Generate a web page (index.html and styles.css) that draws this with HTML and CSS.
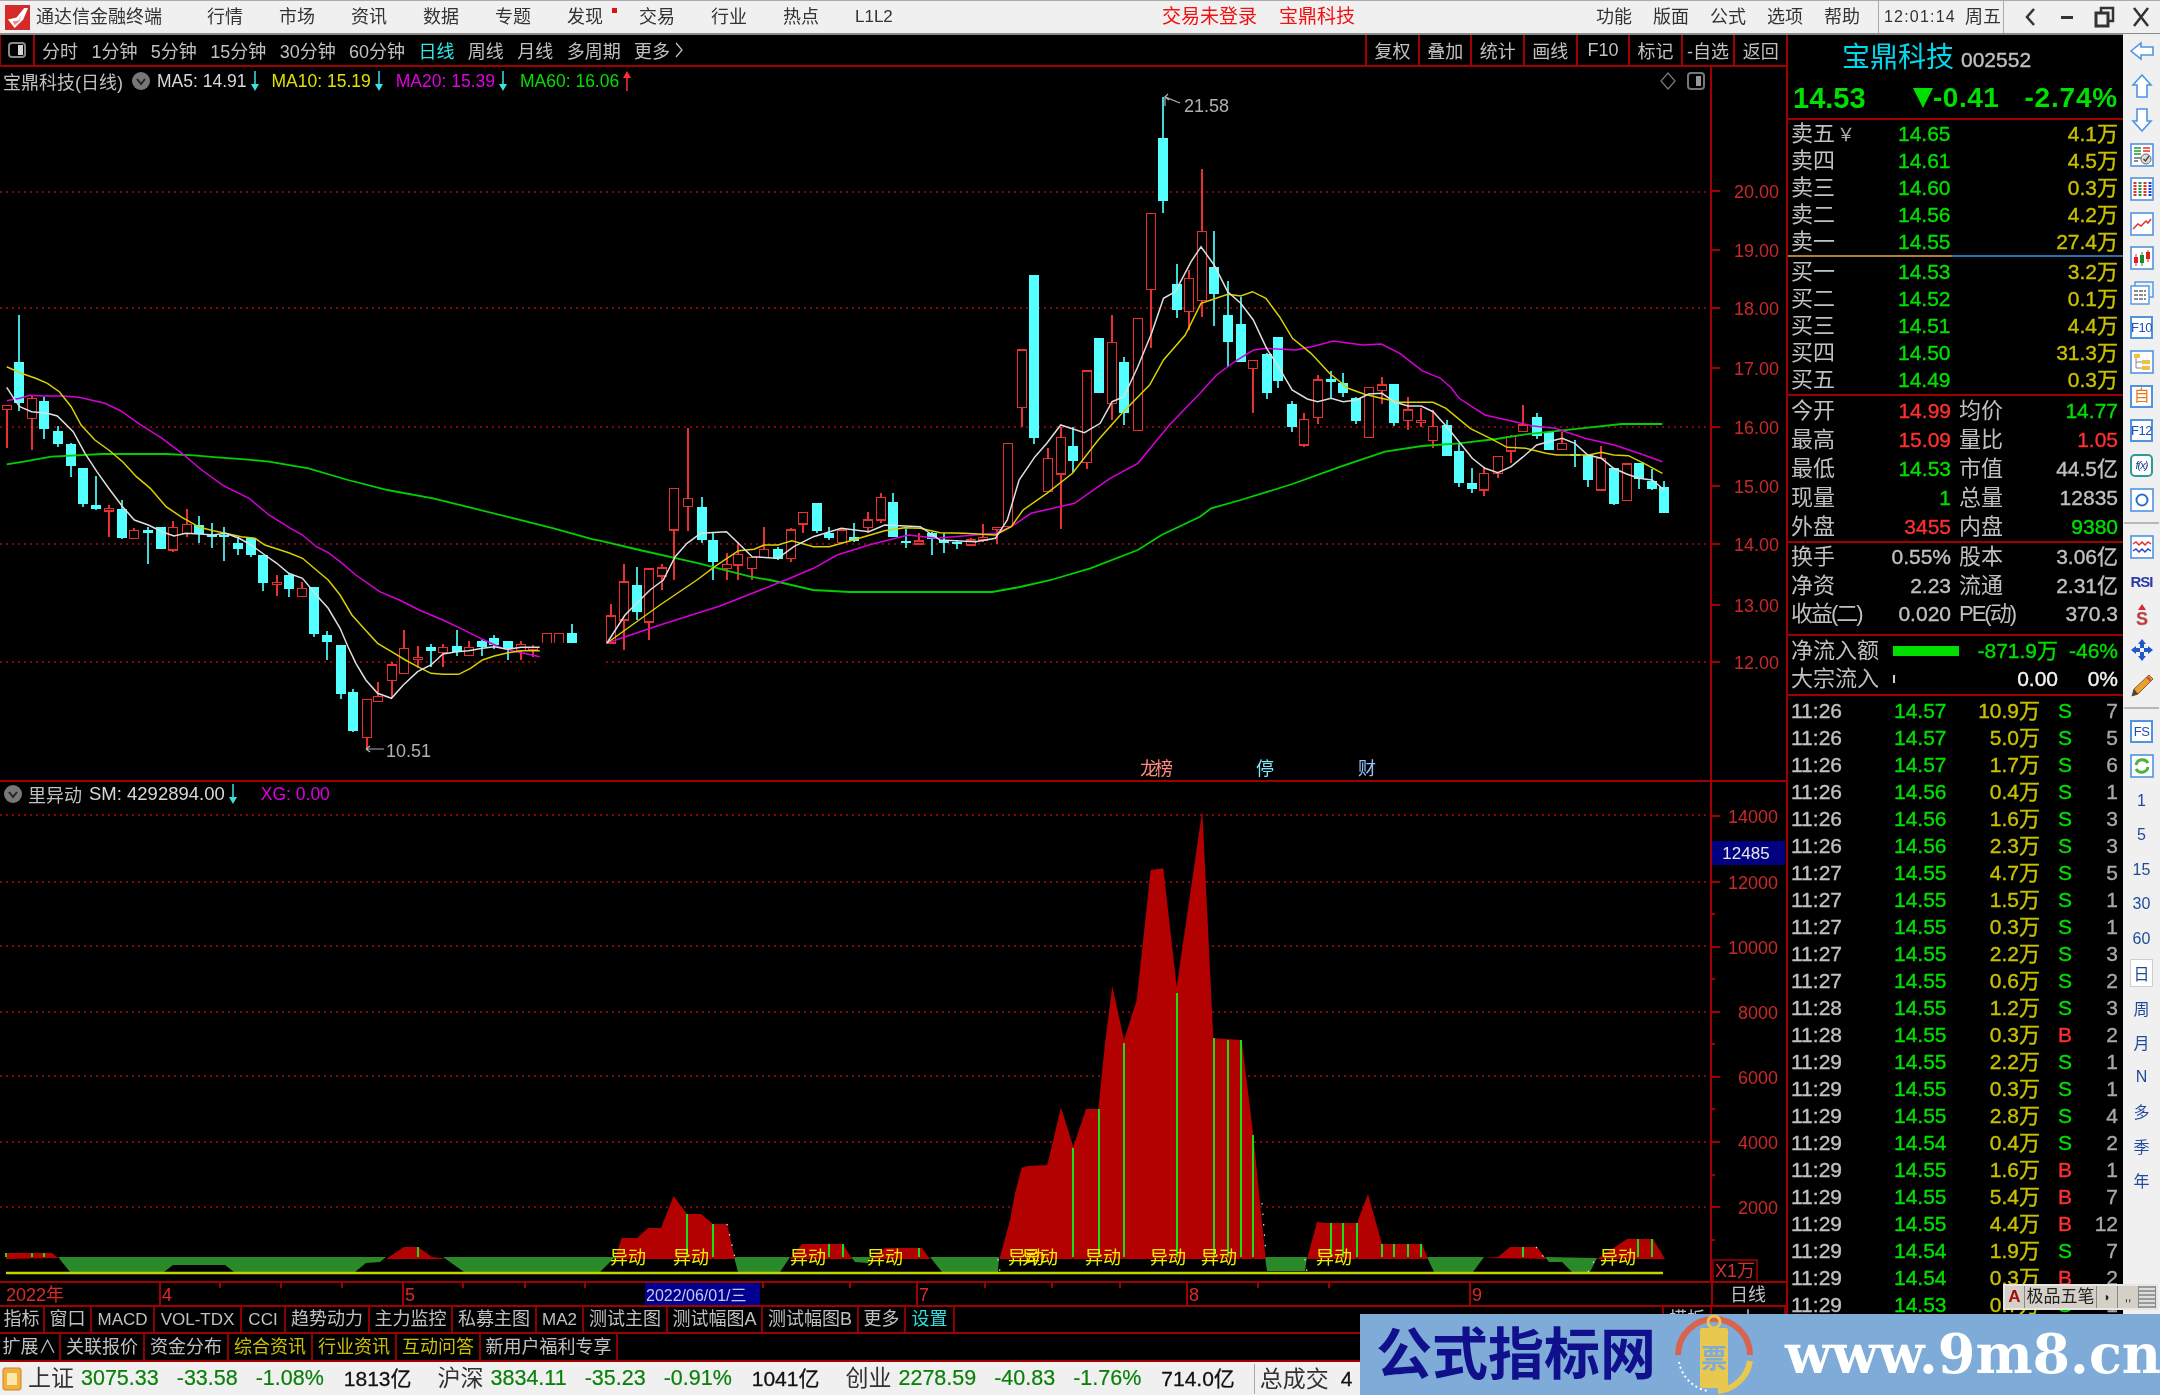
FILE: index.html
```html
<!DOCTYPE html>
<html lang="zh-CN">
<head>
<meta charset="utf-8">
<title>通达信金融终端</title>
<link rel="stylesheet" href="styles.css">
</head>
<body>
<div class="app">
  <header class="titlebar">
    <div class="brand">
      <svg class="logo" viewBox="0 0 26 26"><rect width="26" height="26" fill="#d42a2a"/><path d="M3 15 L12 13 L20 3 L24 3 L19 15 L10 24 L7 20 Z" fill="#fff"/><path d="M8 17 L14 16 L17 11 L15 17 L10 21 Z" fill="#e88"/></svg>
      <span>通达信金融终端</span>
    </div>
    <nav class="menu">
      <span>行情</span><span>市场</span><span>资讯</span><span>数据</span><span>专题</span><span class="has-dot">发现<i class="dot"></i></span><span>交易</span><span>行业</span><span>热点</span><span class="l1">L1L2</span>
    </nav>
    <div class="alert"><span>交易未登录</span><span>宝鼎科技</span></div>
    <nav class="menu-right"><span>功能</span><span>版面</span><span>公式</span><span>选项</span><span>帮助</span></nav>
    <div class="clock"><span class="time">12:01:14</span><span>周五</span></div>
    <div class="winbtns">
      <svg viewBox="0 0 37 30"><path d="M22 7 L15 15 L22 23" fill="none" stroke="#333" stroke-width="2.5"/></svg>
      <svg viewBox="0 0 37 30"><rect x="12" y="14" width="12" height="3" fill="#333"/></svg>
      <svg viewBox="0 0 37 30"><rect x="15" y="6" width="12" height="13" fill="none" stroke="#333" stroke-width="2.5"/><rect x="10" y="11" width="12" height="13" fill="#f0f0f0" stroke="#333" stroke-width="3"/></svg>
      <svg viewBox="0 0 37 30"><path d="M11 6 L25 24 M25 6 L11 24" stroke="#333" stroke-width="2.5"/></svg>
    </div>
  </header>

  <div class="main">
    <section class="workspace">
      <div class="toolbar">
        <div class="panel-toggle"><svg viewBox="0 0 18 16"><rect x="1" y="1" width="16" height="14" rx="3" fill="none" stroke="#8a8a8a" stroke-width="2"/><rect x="10" y="3" width="5" height="10" fill="#d8d8d8"/></svg></div>
        <div class="periods">
          <span>分时</span><span>1分钟</span><span>5分钟</span><span>15分钟</span><span>30分钟</span><span>60分钟</span><span class="on">日线</span><span>周线</span><span>月线</span><span>多周期</span><span class="more">更多<svg viewBox="0 0 10 18"><path d="M2 2 L8 9 L2 16" fill="none" stroke="#c0c0c0" stroke-width="1.3"/></svg></span>
        </div>
        <div class="tools">
          <span>复权</span><span>叠加</span><span>统计</span><span>画线</span><span>F10</span><span>标记</span><span>-自选</span><span>返回</span>
        </div>
      </div>

      <div class="chart chart-main">
        <svg id="mainChart" class="plot" viewBox="0 67 1786 713"></svg>
        <div class="legend">
          <span class="lg-name">宝鼎科技(日线)</span>
          <svg class="lg-circle" viewBox="0 0 18 18"><circle cx="9" cy="9" r="9" fill="#777"/><path d="M5 7 L9 12 L13 7" fill="none" stroke="#222" stroke-width="2"/></svg>
          <span class="lg-item ma5">MA5: 14.91</span><svg class="arr" viewBox="0 0 8 20"><path d="M4 0 V18" stroke="#3fe0e0" stroke-width="1.5"/><path d="M0 13 H8 L4 20 Z" fill="#3fe0e0"/></svg>
          <span class="lg-item ma10">MA10: 15.19</span><svg class="arr" viewBox="0 0 8 20"><path d="M4 0 V18" stroke="#3fe0e0" stroke-width="1.5"/><path d="M0 13 H8 L4 20 Z" fill="#3fe0e0"/></svg>
          <span class="lg-item ma20">MA20: 15.39</span><svg class="arr" viewBox="0 0 8 20"><path d="M4 0 V18" stroke="#3fe0e0" stroke-width="1.5"/><path d="M0 13 H8 L4 20 Z" fill="#3fe0e0"/></svg>
          <span class="lg-item ma60">MA60: 16.06</span><svg class="arr" viewBox="0 0 8 20"><path d="M4 2 V20" stroke="#ff3030" stroke-width="1.5"/><path d="M0 7 H8 L4 0 Z" fill="#ff3030"/></svg>
          <span class="lg-tools">
            <svg class="lg-diamond" viewBox="0 0 16 18"><path d="M8 1 L15 9 L8 17 L1 9 Z" fill="none" stroke="#777" stroke-width="1.3"/></svg>
            <svg class="lg-panel" viewBox="0 0 18 18"><rect x="1" y="1" width="16" height="16" rx="3" fill="none" stroke="#777" stroke-width="2"/><rect x="9" y="4" width="5" height="10" fill="#999"/></svg>
          </span>
        </div>
      </div>

      <div class="chart chart-sub">
        <svg id="subChart" class="plot" viewBox="0 782 1786 499"></svg>
        <div class="legend legend-sub">
          <svg class="lg-circle" viewBox="0 0 18 18"><circle cx="9" cy="9" r="9" fill="#777"/><path d="M5 7 L9 12 L13 7" fill="none" stroke="#222" stroke-width="2"/></svg>
          <span class="lg-name sub-name">里异动</span>
          <span class="lg-item ma5 sub-sm">SM: 4292894.00</span><svg class="arr" viewBox="0 0 8 20"><path d="M4 0 V18" stroke="#3fe0e0" stroke-width="1.5"/><path d="M0 13 H8 L4 20 Z" fill="#3fe0e0"/></svg>
          <span class="lg-item ma20 sub-xg">XG: 0.00</span>
        </div>
      </div>

      <div class="dateaxis"><svg id="dateAxis" class="plot" viewBox="0 1283 1786 22"></svg></div>

      <div class="tabs tabs-a">
        <span>指标</span><span>窗口</span><span class="lat">MACD</span><span class="lat">VOL-TDX</span><span class="lat">CCI</span><span>趋势动力</span><span>主力监控</span><span>私募主图</span><span class="lat">MA2</span><span>测试主图</span><span>测试幅图A</span><span>测试幅图B</span><span>更多</span><span class="cy">设置</span><span class="blank"></span><span>模板</span><span>十</span>
      </div>
      <div class="tabs tabs-b">
        <span>扩展∧</span><span>关联报价</span><span>资金分布</span><span class="yl">综合资讯</span><span class="yl">行业资讯</span><span class="yl">互动问答</span><span>新用户福利专享</span>
      </div>
    </section>

    <aside class="quote">
      <div class="q-head">
        <div class="q-name"><span class="nm">宝鼎科技</span><span class="cd">002552</span></div>
        <div class="q-price"><span class="p1">14.53</span><span class="p2"><i class="tri"></i>-0.41</span><span class="p3">-2.74%</span></div>
      </div>
      <div class="book asks">
        <div class="row-q"><span>卖五<em class="yen">￥</em></span><b class="gr">14.65</b><u>4.1万</u></div>
        <div class="row-q"><span>卖四</span><b class="gr">14.61</b><u>4.5万</u></div>
        <div class="row-q"><span>卖三</span><b class="gr">14.60</b><u>0.3万</u></div>
        <div class="row-q"><span>卖二</span><b class="gr">14.56</b><u>4.2万</u></div>
        <div class="row-q"><span>卖一</span><b class="gr">14.55</b><u>27.4万</u></div>
      </div>
      <div class="midline"><i></i><i></i></div>
      <div class="book bids">
        <div class="row-q"><span>买一</span><b class="gr">14.53</b><u>3.2万</u></div>
        <div class="row-q"><span>买二</span><b class="gr">14.52</b><u>0.1万</u></div>
        <div class="row-q"><span>买三</span><b class="gr">14.51</b><u>4.4万</u></div>
        <div class="row-q"><span>买四</span><b class="gr">14.50</b><u>31.3万</u></div>
        <div class="row-q"><span>买五</span><b class="gr">14.49</b><u>0.3万</u></div>
      </div>
      <div class="info info-a">
        <div class="row-i"><span>今开</span><b class="rd">14.99</b><span>均价</span><b class="gr">14.77</b></div>
        <div class="row-i"><span>最高</span><b class="rd">15.09</b><span>量比</span><b class="rd">1.05</b></div>
        <div class="row-i"><span>最低</span><b class="gr">14.53</b><span>市值</span><b>44.5亿</b></div>
        <div class="row-i"><span>现量</span><b class="gr">1</b><span>总量</span><b>12835</b></div>
        <div class="row-i"><span>外盘</span><b class="rd">3455</b><span>内盘</span><b class="gr">9380</b></div>
      </div>
      <div class="info info-b">
        <div class="row-i"><span>换手</span><b>0.55%</b><span>股本</span><b>3.06亿</b></div>
        <div class="row-i"><span>净资</span><b>2.23</b><span>流通</span><b>2.31亿</b></div>
        <div class="row-i"><span class="tight">收益(二)</span><b>0.020</b><span class="tight">PE(动)</span><b>370.3</b></div>
      </div>
      <div class="flow">
        <div class="row-f"><span>净流入额</span><i class="bar"></i><b class="gr">-871.9万</b><b class="gr">-46%</b></div>
        <div class="row-f"><span>大宗流入</span><i class="bar0"></i><b class="wh">0.00</b><b class="wh">0%</b></div>
      </div>
      <div class="ticks">
        <div class="row-t"><span>11:26</span><b class="gr">14.57</b><u>10.9万</u><b class="gr">S</b><em>7</em></div>
        <div class="row-t"><span>11:26</span><b class="gr">14.57</b><u>5.0万</u><b class="gr">S</b><em>5</em></div>
        <div class="row-t"><span>11:26</span><b class="gr">14.57</b><u>1.7万</u><b class="gr">S</b><em>6</em></div>
        <div class="row-t"><span>11:26</span><b class="gr">14.56</b><u>0.4万</u><b class="gr">S</b><em>1</em></div>
        <div class="row-t"><span>11:26</span><b class="gr">14.56</b><u>1.6万</u><b class="gr">S</b><em>3</em></div>
        <div class="row-t"><span>11:26</span><b class="gr">14.56</b><u>2.3万</u><b class="gr">S</b><em>3</em></div>
        <div class="row-t"><span>11:27</span><b class="gr">14.55</b><u>4.7万</u><b class="gr">S</b><em>5</em></div>
        <div class="row-t"><span>11:27</span><b class="gr">14.55</b><u>1.5万</u><b class="gr">S</b><em>1</em></div>
        <div class="row-t"><span>11:27</span><b class="gr">14.55</b><u>0.3万</u><b class="gr">S</b><em>1</em></div>
        <div class="row-t"><span>11:27</span><b class="gr">14.55</b><u>2.2万</u><b class="gr">S</b><em>3</em></div>
        <div class="row-t"><span>11:27</span><b class="gr">14.55</b><u>0.6万</u><b class="gr">S</b><em>2</em></div>
        <div class="row-t"><span>11:28</span><b class="gr">14.55</b><u>1.2万</u><b class="gr">S</b><em>3</em></div>
        <div class="row-t"><span>11:28</span><b class="gr">14.55</b><u>0.3万</u><b class="rd">B</b><em>2</em></div>
        <div class="row-t"><span>11:29</span><b class="gr">14.55</b><u>2.2万</u><b class="gr">S</b><em>1</em></div>
        <div class="row-t"><span>11:29</span><b class="gr">14.55</b><u>0.3万</u><b class="gr">S</b><em>1</em></div>
        <div class="row-t"><span>11:29</span><b class="gr">14.55</b><u>2.8万</u><b class="gr">S</b><em>4</em></div>
        <div class="row-t"><span>11:29</span><b class="gr">14.54</b><u>0.4万</u><b class="gr">S</b><em>2</em></div>
        <div class="row-t"><span>11:29</span><b class="gr">14.55</b><u>1.6万</u><b class="rd">B</b><em>1</em></div>
        <div class="row-t"><span>11:29</span><b class="gr">14.55</b><u>5.4万</u><b class="rd">B</b><em>7</em></div>
        <div class="row-t"><span>11:29</span><b class="gr">14.55</b><u>4.4万</u><b class="rd">B</b><em>12</em></div>
        <div class="row-t"><span>11:29</span><b class="gr">14.54</b><u>1.9万</u><b class="gr">S</b><em>7</em></div>
        <div class="row-t"><span>11:29</span><b class="gr">14.54</b><u>0.3万</u><b class="rd">B</b><em>2</em></div>
        <div class="row-t"><span>11:29</span><b class="gr">14.53</b><u>0.7万</u><b class="gr">S</b><em>1</em></div>
      </div>
    </aside>

    <aside class="strip">
      <div class="si"><svg viewBox="0 0 24 24"><path d="M1 12 L11 4 V8 H23 V16 H11 V20 Z" fill="#fff" stroke="#4f94e0" stroke-width="1.6"/></svg></div>
      <div class="si"><svg viewBox="0 0 24 24"><path d="M12 1 L21 11 H17 V23 H7 V11 H3 Z" fill="#fff" stroke="#4f94e0" stroke-width="1.6"/></svg></div>
      <div class="si"><svg viewBox="0 0 24 24"><path d="M12 23 L21 13 H17 V1 H7 V13 H3 Z" fill="#fff" stroke="#4f94e0" stroke-width="1.6"/></svg></div>
      <div class="si"><svg viewBox="0 0 24 24"><rect x="1" y="1" width="22" height="22" fill="#fff" stroke="#4f94e0" stroke-width="1.6"/><path d="M4 5h7M4 8h7M4 11h7" stroke="#1f9a3a" stroke-width="1.6"/><path d="M13 5h7M13 8h7" stroke="#e03030" stroke-width="1.6"/><path d="M4 15h7M4 18h4" stroke="#666" stroke-width="1.5"/><circle cx="16" cy="16" r="5" fill="#ddd" stroke="#666"/><path d="M13.500 16 L15.500 18 L19 13" fill="none" stroke="#444" stroke-width="1.4"/></svg></div>
      <div class="si"><svg viewBox="0 0 24 24"><rect x="1" y="1" width="22" height="22" fill="#fff" stroke="#4f94e0" stroke-width="1.6"/><path d="M5 5v15" stroke="#e03030" stroke-width="3" stroke-dasharray="2 1"/><path d="M10 5v15" stroke="#1f9a3a" stroke-width="3" stroke-dasharray="2 1"/><path d="M15 5v15" stroke="#e03030" stroke-width="3" stroke-dasharray="2 1"/><path d="M20 5v15" stroke="#2040e0" stroke-width="3" stroke-dasharray="2 1"/></svg></div>
      <div class="si"><svg viewBox="0 0 24 24"><rect x="1" y="1" width="22" height="22" fill="#fff" stroke="#4f94e0" stroke-width="1.6"/><path d="M3 17 L8 12 L11 14 L16 9 L18 11 L21 7" fill="none" stroke="#e03030" stroke-width="1.5"/></svg></div>
      <div class="si"><svg viewBox="0 0 24 24"><rect x="1" y="1" width="22" height="22" fill="#fff" stroke="#4f94e0" stroke-width="1.6"/><path d="M6 8v12M18 4v12" stroke="#e02020"/><path d="M12 6v14" stroke="#1a8a30"/><rect x="4" y="11" width="4" height="6" fill="#e02020"/><rect x="10" y="9" width="4" height="8" fill="#1a8a30"/><rect x="16" y="6" width="4" height="7" fill="#e02020"/></svg></div>
      <div class="si"><svg viewBox="0 0 24 24"><rect x="5" y="1" width="18" height="15" fill="#eef4fb" stroke="#4f94e0" stroke-width="1.4"/><rect x="1" y="5" width="18" height="18" fill="#fff" stroke="#4f94e0" stroke-width="1.4"/><path d="M4 10h12M4 14h12M4 18h12" stroke="#666" stroke-width="1.6" stroke-dasharray="4 1"/></svg></div>
      <div class="si"><span class="boxed">F10</span></div>
      <div class="si"><svg viewBox="0 0 24 24"><rect x="1" y="1" width="22" height="22" fill="#fff" stroke="#4f94e0" stroke-width="1.6"/><path d="M6 7v11h7M6 12h7" fill="none" stroke="#888"/><rect x="4" y="4" width="6" height="4" fill="#f0c040"/><rect x="12" y="10" width="8" height="4" fill="#f0c040"/><rect x="12" y="16" width="8" height="4" fill="#f0c040"/></svg></div>
      <div class="si"><span class="boxed bx-or">自</span></div>
      <div class="si"><span class="boxed">F12</span></div>
      <div class="si"><span class="boxed bx-fx"><i>f(x)</i></span></div>
      <div class="si"><svg viewBox="0 0 24 24"><rect x="1" y="1" width="22" height="22" fill="#fff" stroke="#4f94e0" stroke-width="1.6"/><circle cx="12" cy="12" r="5.500" fill="none" stroke="#2a6fd0" stroke-width="2"/></svg></div>
      <div class="sep"></div>
      <div class="si"><svg viewBox="0 0 24 24"><rect x="1" y="1" width="22" height="22" fill="#fff" stroke="#4f94e0" stroke-width="1.6"/><path d="M3 9 L6 7 L9 10 L12 7 L15 10 L18 7 L21 9" fill="none" stroke="#e03030" stroke-width="1.5"/><path d="M3 16 L6 14 L9 17 L12 14 L15 17 L18 14 L21 16" fill="none" stroke="#3040c0" stroke-width="1.5"/></svg></div>
      <div class="si"><span class="rsi">RSI</span></div>
      <div class="si"><svg viewBox="0 0 24 24"><path d="M12 0 L16 6 H8 Z" fill="#d03030"/><text x="12" y="21" class="s-glyph">S</text></svg></div>
      <div class="si"><svg viewBox="0 0 24 24"><path d="M12 1 L16 6 H14 V10 H10 V6 H8 Z M12 23 L16 18 H14 V14 H10 V18 H8 Z M1 12 L6 8 V10 H10 V14 H6 V16 Z M23 12 L18 8 V10 H14 V14 H18 V16 Z" fill="#1f58c8"/></svg></div>
      <div class="si"><svg viewBox="0 0 24 24"><path d="M19 2 L23 6 L8 21 L2 23 L4 16 Z" fill="#e8a030" stroke="#8a6020"/><path d="M2 23 L4 16 L8 21 Z" fill="#444"/><path d="M17 4 L21 8" stroke="#d04040" stroke-width="2"/></svg></div>
      <div class="sep"></div>
      <div class="si"><span class="boxed">FS</span></div>
      <div class="si"><svg viewBox="0 0 24 24"><rect x="1" y="1" width="22" height="22" fill="#fff" stroke="#4f94e0" stroke-width="1.6"/><path d="M6 11 A6.500 6.500 0 0 1 18 9 M18 13 A6.500 6.500 0 0 1 6 15" fill="none" stroke="#50b040" stroke-width="3"/></svg></div>
      <div class="si txt">1</div>
      <div class="si txt">5</div>
      <div class="si txt">15</div>
      <div class="si txt">30</div>
      <div class="si txt">60</div>
      <div class="si txt sel"><span>日</span></div>
      <div class="si txt">周</div>
      <div class="si txt">月</div>
      <div class="si txt">N</div>
      <div class="si txt">多</div>
      <div class="si txt">季</div>
      <div class="si txt">年</div>
    </aside>
  </div>

  <footer class="statusbar">
    <svg class="st-icon" viewBox="0 0 20 24"><rect x="1" y="1" width="18" height="22" rx="2" fill="#f2b040" stroke="#d08020"/><rect x="5" y="6" width="10" height="12" fill="#fce8a8"/></svg>
    <span class="st-name">上证</span><span class="st-v">3075.33</span><span class="st-v">-33.58</span><span class="st-v">-1.08%</span><span class="st-a">1813亿</span>
    <span class="st-name st-next">沪深</span><span class="st-v">3834.11</span><span class="st-v">-35.23</span><span class="st-v">-0.91%</span><span class="st-a">1041亿</span>
    <span class="st-name st-next">创业</span><span class="st-v">2278.59</span><span class="st-v">-40.83</span><span class="st-v">-1.76%</span><span class="st-a">714.0亿</span>
    <span class="st-total">总成交</span><span class="st-a st-last">4</span>
  </footer>

  <div class="ime">
    <span class="ime-a">A</span><span class="ime-n">极品五笔</span><span class="ime-m">◗</span><span class="ime-m">,,</span><span class="ime-k"></span>
  </div>

  <div class="watermark">
    <span class="wm-cn">公式指标网</span>
    <svg class="wm-logo" viewBox="0 0 80 82">
      <path d="M4 41 A36 36 0 0 1 76 41" fill="none" stroke="#d8634f" stroke-width="6"/>
      <path d="M76 47 A36 36 0 0 1 44 77" fill="none" stroke="#e8c84e" stroke-width="6"/>
      <path d="M5 48 A36 36 0 0 0 34 77" fill="none" stroke="#fff" stroke-width="2" stroke-dasharray="2 3"/>
      <rect x="26" y="14" width="28" height="60" rx="2" fill="#e8c84e"/>
      <circle cx="40" cy="8" r="6" fill="none" stroke="#e8c84e" stroke-width="3"/>
      <text x="40" y="54" class="wm-coin">票</text>
    </svg>
    <span class="wm-url">www.9m8.cn</span>
  </div>
</div>
<script src="app.js"></script>
</body>
</html>
```

FILE: styles.css
```css
* { box-sizing: border-box; }
html, body { margin: 0; padding: 0; background: #000; }
body { font-family: "Liberation Sans", "Noto Sans CJK SC", sans-serif; }
.app { position: relative; width: 2160px; height: 1395px; overflow: hidden; display: flex; flex-direction: column; background: #000; color: #c0c0c0; filter: blur(.35px); }

/* title bar */
.titlebar { flex: 0 0 35px; display: flex; align-items: center; background: #f0f0f0; border-top: 1px solid #aaa; border-bottom: 2px solid #8c8c8c; color: #333; font-size: 18px; line-height: 32px; }
.brand { flex: 0 0 207px; display: flex; align-items: center; gap: 6px; padding-left: 5px; }
.logo { width: 25px; height: 25px; }
.menu { flex: 0 0 955px; display: flex; gap: 36px; }
.menu .l1 { font-size: 17px; }
.has-dot { position: relative; }
.dot { position: absolute; left: 45px; top: 7px; width: 5px; height: 5px; background: #e01010; }
.alert { flex: 0 0 434px; display: flex; gap: 22px; color: #f01010; font-size: 19px; }
.menu-right { flex: 0 0 282px; display: flex; gap: 21px; font-size: 18px; }
.clock { flex: 0 0 126px; height: 32px; display: flex; align-items: center; gap: 9px; padding-left: 5px; border-left: 1px solid #aaa; border-right: 1px solid #aaa; }
.time { font-size: 16px; letter-spacing: 1.2px; }
.winbtns { flex: 1; display: flex; padding-left: 8px; }
.winbtns svg { width: 37px; height: 30px; }

.main { flex: 0 0 1325px; display: flex; }
.workspace { flex: 0 0 1788px; border-right: 2px solid #a00000; display: flex; flex-direction: column; }

/* toolbar */
.toolbar { flex: 0 0 32px; display: flex; align-items: center; border-bottom: 2px solid #a00000; font-size: 18px; }
.panel-toggle { flex: 0 0 35px; height: 30px; display: flex; align-items: center; justify-content: center; border-right: 2px solid #a00000; border-left: 1px solid #a00000; }
.panel-toggle svg { width: 18px; height: 16px; }
.periods { display: flex; gap: 13.400px; padding-left: 7px; white-space: nowrap; }
.periods .on { color: #30e8e8; }
.more { display: flex; align-items: center; gap: 4px; }
.more svg { width: 10px; height: 18px; }
.tools { margin-left: auto; display: flex; height: 30px; }
.tools span { width: 52.600px; display: flex; align-items: center; justify-content: center; border-left: 2px solid #a00000; }

/* charts */
.chart { position: relative; }
.chart-main { flex: 0 0 715px; border-bottom: 2px solid #a00000; }
.chart-sub { flex: 0 0 501px; border-bottom: 2px solid #a00000; }
.plot { display: block; width: 1786px; height: 100%; }
.legend { position: absolute; left: 0; top: 0; width: 1710px; height: 28px; display: flex; align-items: center; font-size: 17.500px; padding-left: 3px; white-space: nowrap; }
.lg-name { color: #c0c0c0; font-size: 18px; }
.lg-circle { width: 18px; height: 18px; margin-left: 9px; }
.lg-item { margin-left: 7px; }
.arr { width: 8px; height: 20px; margin-left: 4px; margin-right: 6px; }
.ma5 { color: #d8d8d8; }
.ma10 { color: #e0e000; }
.ma20 { color: #e000e0; }
.ma60 { color: #00e000; }
.lg-tools { margin-left: auto; display: flex; align-items: center; gap: 11px; padding-right: 5px; }
.lg-diamond { width: 16px; height: 18px; }
.lg-panel { width: 18px; height: 18px; }
.legend-sub { top: 0; height: 24px; padding-left: 0; }
.legend-sub .lg-circle { margin-left: 4px; }
.sub-name { margin-left: 6px; }
.sub-sm { font-size: 18.500px; }
.sub-xg { margin-left: 18px; }

.gridline { stroke: #a80a0a; stroke-width: 1.5; stroke-dasharray: 2 4; fill: none; }
.axisline { stroke: #a00000; stroke-width: 2; }
.tick { stroke: #a00000; stroke-width: 2; }
.axislabel { fill: #c82a2a; font-size: 18px; text-anchor: end; dominant-baseline: central; }
.up-wick { stroke: #e83030; stroke-width: 1.5; shape-rendering: crispEdges; }
.up-body { stroke: #e83030; stroke-width: 1.5; fill: #000; shape-rendering: crispEdges; }
.dn-wick { stroke: #3fd8d8; stroke-width: 1.5; shape-rendering: crispEdges; }
.dn-body { fill: #54ffff; shape-rendering: crispEdges; }
.cover { fill: #000; }
.line-ma5 { stroke: #dedede; stroke-width: 1.5; fill: none; }
.line-ma10 { stroke: #d8d000; stroke-width: 1.5; fill: none; }
.line-ma20 { stroke: #d800d8; stroke-width: 1.5; fill: none; }
.line-ma60 { stroke: #00d000; stroke-width: 1.8; fill: none; }
.extreme { fill: #b0b0b0; font-size: 18px; dominant-baseline: central; }
.extreme-arrow { stroke: #b0b0b0; stroke-width: 1.2; fill: none; }
.mark { font-size: 18px; text-anchor: middle; dominant-baseline: central; }
.mark-a { fill: #ff8a80; letter-spacing: -3px; }
.mark-b { fill: #7fe8f8; }
.mark-c { fill: #8fc4ff; }
.red-area { fill: #b30000; }
.green-area { fill: #2a8a2a; }
.sig-line { stroke: #18e018; stroke-width: 1.6; shape-rendering: crispEdges; }
.base-line { stroke: #c4d400; stroke-width: 2.5; }
.flag { fill: #f0f000; font-size: 18px; text-anchor: middle; dominant-baseline: central; }
.edge-dots { stroke: #e8e8e8; stroke-width: 1.2; stroke-dasharray: 1.5 9; fill: none; }
.now-box { fill: #000080; }
.now-text { fill: #e8e8e8; font-size: 17px; text-anchor: middle; dominant-baseline: central; }
.unit-box { fill: none; stroke: #a00000; stroke-width: 1.5; }
.unit-text { fill: #d83030; font-size: 18px; dominant-baseline: central; }

.dateaxis { flex: 0 0 24px; border-bottom: 2px solid #a00000; }
.date-label { fill: #e02828; font-size: 18px; dominant-baseline: central; }
.date-now { fill: #000090; }
.date-now-text { fill: #c8c8e8; font-size: 16px; dominant-baseline: central; }
.date-cell { fill: #c0c0c0; font-size: 18px; text-anchor: middle; dominant-baseline: central; }

/* tabs */
.tabs { display: grid; align-items: stretch; font-size: 18px; line-height: 25px; text-align: center; white-space: nowrap; }
.tabs span { border-right: 2px solid #8c0000; overflow: hidden; }
.tabs-a { flex: 0 0 25px; border-bottom: 2px solid #a00000; grid-template-columns: 45px 47px 63px 87px 44px 84px 83px 84px 47px 84px 95px 96px 47px 49px 709px 48px 1fr; }
.tabs-b { flex: 0 0 27px; border-bottom: 2px solid #a00000; grid-template-columns: 61px 84px 84px 84px 84px 84px 137px; line-height: 25px; }
.tabs-b span { padding-top: 1px; }
.tabs .lat { font-size: 17px; }
.tabs .blank { border-right: 2px solid #8c0000; }
.tabs .cy { color: #30e0e0; }
.tabs .yl { color: #c8c000; }

/* quote panel */
.quote { flex: 0 0 335px; overflow: hidden; font-size: 22px; line-height: 27px; }
.quote b, .quote u, .quote em { font-weight: 400; font-style: normal; text-decoration: none; font-size: 21px; -webkit-text-stroke: .35px currentColor; }
.quote .gr { color: #00e000; }
.quote .rd { color: #ff3030; }
.quote .wh { color: #f4f4f4; }
.q-head { height: 85px; border-bottom: 2px solid #a00000; }
.q-name { height: 41px; display: flex; align-items: flex-end; padding-left: 54px; }
.q-name .nm { color: #00d8ee; font-size: 28px; line-height: 36px; }
.q-name .cd { margin-left: 7px; font-size: 21px; line-height: 32px; -webkit-text-stroke: .35px currentColor; }
.q-price { height: 42px; padding: 2px 5px 0; display: grid; grid-template-columns: 120px 87px 1fr; align-items: center; color: #00e000; font-weight: 700; font-size: 28px; line-height: 36px; }
.q-price .p1 { font-size: 29px; }
.q-price .p2 { display: flex; align-items: center; letter-spacing: .5px; }
.tri { width: 0; height: 0; border-left: 10px solid transparent; border-right: 10px solid transparent; border-top: 20px solid #00e000; }
.q-price .p3 { text-align: right; letter-spacing: .8px; }
.book { padding: 0 5px 0 3px; }
.row-q { height: 27px; display: grid; grid-template-columns: 107px 60px 1fr; }
.row-q span { white-space: nowrap; }
.row-q u { text-align: right; color: #c8c000; }
.quote .yen { color: #b0b0b0; margin-left: 2px; font-size: 18px; -webkit-text-stroke: 0; }
.asks { height: 135px; }
.midline { height: 2px; display: grid; grid-template-columns: 164px 1fr; }
.midline i:first-child { background: #b08030; }
.midline i:last-child { background: #2e6ea6; }
.bids { height: 139px; border-bottom: 2px solid #a00000; padding-top: 1px; }
.info { padding: 0 5px 0 3px; border-bottom: 2px solid #a00000; }
.info-a { height: 147px; }
.info-b { height: 93px; }
.row-i { height: 29px; line-height: 29px; display: grid; grid-template-columns: 70px 90px 76px 1fr; }
.info-b .row-i { height: 28.500px; line-height: 28.500px; }
.row-i b { text-align: right; }
.row-i span:nth-of-type(2) { padding-left: 8px; }
.row-i .tight { white-space: nowrap; letter-spacing: -2px; }
.flow { height: 60px; padding: 1px 5px 0 3px; border-bottom: 2px solid #a00000; }
.row-f { height: 28px; line-height: 28px; display: grid; grid-template-columns: 102px 70px 95px 1fr; align-items: center; }
.row-f b { text-align: right; }
.bar { display: block; width: 66px; height: 10px; background: #00e000; }
.bar0 { display: block; width: 2px; height: 8px; background: #d0d0d0; }
.ticks { padding: 1px 5px 0 3px; }
.row-t { height: 27px; display: grid; grid-template-columns: 103px 60px 86px 40px 1fr; }
.row-t span { font-size: 21px; -webkit-text-stroke: .35px currentColor; }
.row-t u { text-align: right; color: #c8c000; }
.row-t b { padding-left: 18px; }
.row-t b:first-of-type { padding-left: 0; }
.row-t em { text-align: right; color: #a8a8a8; }

/* icon strip */
.strip { flex: 1; background: #f0f0f0; margin-top: -1px; overflow: hidden; }
.si { height: 34.500px; display: flex; align-items: center; justify-content: center; }
.si svg { width: 24px; height: 24px; }
.sep { height: 12.500px; position: relative; }
.sep::after { content: ""; position: absolute; left: 1px; right: 1px; top: 5px; height: 2px; background: #b8b8b8; }
.boxed { width: 23px; height: 23px; display: flex; align-items: center; justify-content: center; background: #fff; border: 2px solid #4f94e0; color: #1d4fb4; font-size: 13px; line-height: 1; letter-spacing: -.5px; }
.bx-or { color: #e87a20; font-size: 16px; }
.bx-fx { border-radius: 5px; border-color: #2a9a9a; color: #203a90; font-size: 11px; letter-spacing: -1px; }
.rsi { color: #2a3aa8; font-weight: 700; font-size: 15px; letter-spacing: -1px; }
.s-glyph { fill: #d03030; stroke: #999; stroke-width: .4; font-size: 18px; font-weight: 700; text-anchor: middle; font-family: "Liberation Sans", sans-serif; }
.txt { color: #1f4a9a; font-size: 16px; }
.sel span { width: 23px; height: 28px; display: flex; align-items: center; justify-content: center; background: #fff; border: 1px solid #cfcfcf; }

/* status bar */
.statusbar { flex: 0 0 35px; display: flex; align-items: center; background: #f0f0f0; border-bottom: 2px solid #334; color: #222; white-space: nowrap; font-size: 21px; line-height: 33px; }
.st-icon { width: 20px; height: 24px; margin-left: 2px; }
.st-name { font-size: 23px; margin-left: 6px; color: #333; }
.st-next { margin-left: 26px; }
.st-v { color: #0a800a; font-size: 21.500px; margin-left: 18px; -webkit-text-stroke: .2px currentColor; }
.st-name + .st-v { margin-left: 7px; }
.st-a { margin-left: 20px; color: #111; font-size: 21px; -webkit-text-stroke: .3px currentColor; }
.st-total { margin-left: 19px; padding-left: 5px; height: 30px; border-left: 1px solid #aaa; color: #333; font-size: 23px; line-height: 30px; }
.st-last { margin-left: 12px; }

/* overlays */
.ime { position: absolute; left: 2003px; top: 1284px; width: 155px; height: 26px; display: flex; align-items: stretch; background: #d4d0c8; border: 2px solid #e8e6e0; color: #222; font-size: 17px; line-height: 22px; z-index: 3; white-space: nowrap; }
.ime span { border-right: 1px solid #888; text-align: center; }
.ime-a { width: 20px; color: #a01010; font-weight: 700; }
.ime-n { width: 72px; }
.ime-m { width: 21px; font-size: 12px; }
.ime-k { flex: 1; background: repeating-linear-gradient(#999 0 2px, #ddd 2px 4px); border-right: 0; }

.watermark { position: absolute; left: 1360px; top: 1314px; width: 800px; height: 81px; display: flex; align-items: center; background: #7fabd8; z-index: 2; overflow: hidden; }
.wm-cn { margin-left: 16px; width: 288px; color: #10108c; font-size: 56px; font-weight: 700; line-height: 81px; letter-spacing: 0; white-space: nowrap; }
.wm-logo { width: 80px; height: 82px; margin-left: 18px; flex: none; }
.wm-coin { fill: #7fabd8; font-size: 26px; font-weight: 700; text-anchor: middle; }
.wm-url { margin-left: 31px; color: #fff; font-family: "DejaVu Serif", serif; font-weight: 700; font-size: 54px; line-height: 81px; white-space: nowrap; }
```

FILE: app.js
```js
var NS = 'http://www.w3.org/2000/svg';
function el(p, tag, cls, attrs, text) {
  var n = document.createElementNS(NS, tag);
  if (cls) n.setAttribute('class', cls);
  for (var k in attrs) n.setAttribute(k, attrs[k]);
  if (text != null) n.textContent = text;
  p.appendChild(n);
  return n;
}
var m7 = function (x, y) { return [x / 2.529, 280 + y / 3]; };
var m8 = function (x, y) { return [600 + x / 2.529, 80 + y / 3]; };
var m9 = function (x, y) { return [1200 + x / 2.703, 200 + y / 3]; };
var mF = function (x, y) { return [x, y]; };

/* [type, x, wickTop, wickBottom, bodyTop, bodyBottom] */
var c7 = [
['r',17,380,505,376,388],['c',47,105,392,245,370],['r',81,345,510,355,415],['c',112,352,478,362,447],['c',146,438,500,452,492],
['c',180,490,592,492,558],['c',210,565,680,565,672],['c',244,588,690,674,686],['r',275,675,770,686,693],['c',309,660,778,686,775],
['r',339,745,778,751,775],['c',374,740,852,750,758],['c',408,740,807,740,807],['r',438,722,815,742,810],['r',472,686,770,733,760],
['c',503,708,790,736,762],['c',537,730,803,765,771],['c',567,740,843,765,771],['c',601,770,825,790,806],['c',635,772,830,775,826],
['c',665,825,933,826,910],['r',700,885,947,908,914],['c',730,880,950,885,928],['r',764,905,950,926,950],['c',794,920,1072,920,1063],
['c',828,1052,1140,1065,1086],['c',863,1096,1258,1096,1243],['c',893,1228,1355,1235,1352],['r',927,1258,1410,1258,1373],['r',957,1205,1265,1250,1265],
['r',992,1147,1255,1155,1202],['r',1022,1050,1182,1106,1180],['r',1056,1097,1165,1133,1137],['c',1090,1092,1160,1100,1113],['r',1120,1092,1162,1102,1118],
['c',1155,1050,1127,1097,1115],['r',1185,1082,1128,1103,1126],['c',1219,1078,1128,1083,1100],['c',1250,1065,1108,1075,1095],['c',1284,1082,1140,1082,1108],
['r',1318,1082,1140,1094,1112],['r',1349,1095,1130,1103,1110],['r',1383,1060,1200,1060,1200],['r',1413,1060,1200,1060,1200],['c',1447,1033,1200,1060,1200]
];
var cF = [
['r',611,604,643,616,643],['r',624,564,650,582,620],['c',637,567,620,585,612],['r',649,569,640,569,622],['r',662,564,590,568,576]
];
var c8 = [
['r',187,1225,1500,1225,1350],['r',222,1043,1352,1255,1280],['c',257,1250,1390,1282,1380],['c',287,1357,1500,1380,1447],['r',320,1420,1500,1453,1465],
['r',350,1385,1500,1423,1455],['r',385,1432,1500,1432,1465],['r',415,1340,1435,1408,1432],['c',450,1400,1440,1408,1438],['r',483,1345,1445,1350,1435],
['r',514,1295,1360,1297,1332],['c',548,1268,1360,1268,1352],['c',578,1340,1380,1360,1375],['r',612,1345,1392,1350,1388],['c',643,1330,1385,1372,1382],
['r',677,1295,1360,1320,1343],['r',711,1238,1330,1252,1320],['c',741,1238,1370,1265,1370],['c',775,1347,1405,1382,1388],['r',806,1360,1395,1383,1392],
['c',840,1357,1425,1360,1378],['c',870,1360,1420,1380,1388],['c',904,1380,1407,1385,1392],['r',938,1375,1398,1380,1395],['r',968,1332,1385,1372,1380],
['r',1003,1342,1392,1342,1348],['r',1033,1090,1340,1090,1340],['r',1068,810,1040,810,982],['c',1098,585,1092,585,1075],['r',1132,1105,1235,1135,1235],
['r',1166,1040,1348,1072,1182],['c',1197,1040,1175,1097,1142],['r',1231,873,1168,873,1148],['c',1261,773,940,773,940],['r',1295,705,1020,788,970],
['c',1326,832,1035,845,998],['r',1360,715,1052,715,1052],['r',1394,400,805,400,628],['c',1424,50,400,175,362],['c',1458,552,715,612,690],
['r',1489,570,750,595,695],['r',1523,268,712,455,662]
];
var c9 = [
['c',38,93,377,200,282],['c',75,243,500,345,425],['c',110,290,485,372,485],['r',144,480,640,482,505],['c',180,460,597,463,578],
['c',212,412,565,412,543],['c',249,602,695,612,682],['r',281,640,740,658,735],['r',318,525,672,540,653],['c',354,513,595,538,547],
['c',387,520,590,548,580],['c',423,590,672,595,663],['r',456,560,715,563,712],['r',492,530,612,555,572],['c',525,553,678,553,668],
['r',562,590,690,630,662],['r',598,625,682,662,668],['r',630,630,745,680,722],['c',667,660,768,675,768],['c',700,730,860,752,850],
['c',736,805,880,850,866],['r',768,800,888,820,870],['r',805,770,835,770,820],['r',841,705,790,710,753],['r',874,615,695,675,695],
['c',910,638,718,652,708],['c',942,695,750,695,750],['r',979,695,750,730,748],['c',1013,720,800,762,768],['c',1048,765,862,765,840],
['r',1085,738,870,775,870],['c',1118,805,915,805,912],['r',1153,790,903,792,902],['c',1186,790,867,790,838],['c',1222,808,870,843,866],['c',1255,842,940,860,938]
];

function mapPts(m, a) { var r = []; for (var i = 0; i < a.length; i += 2) r.push(m(a[i], a[i + 1])); return r; }
function toStr(p) { return p.map(function (q) { return q[0].toFixed(1) + ',' + q[1].toFixed(1); }).join(' '); }

var ma5a = mapPts(m7, [17,322,35,355,50,380,80,395,120,400,145,408,185,455,215,520,245,575,275,625,310,680,340,720,375,735,410,755,440,768,470,760,505,762,540,765,570,760,605,775,635,795,670,825,700,850,730,880,765,895,800,945,830,985,860,1045,880,1100,900,1150,925,1200,955,1240,990,1255,1020,1215,1056,1175,1090,1155,1120,1122,1155,1115,1185,1112,1220,1105,1250,1100,1284,1108,1318,1102,1365,1102]);
var ma5b = [[607,643],[625,615],[650,590]].concat(mapPts(m8, [160,1500,190,1430,220,1390,255,1360,320,1355,350,1390,385,1430,450,1435,490,1400,540,1370,610,1345,680,1355,720,1335,810,1340,860,1380,950,1385,1000,1375,1030,1320,1060,1200,1100,1130,1130,1090,1165,1035,1225,1058,1265,1030,1295,965,1325,950,1360,860,1395,760,1425,655,1455,635,1495,545,1520,500])).concat(mapPts(m9, [38,195,75,275,110,310,144,360,180,445,212,500,249,570,290,597,318,605,354,595,387,605,423,600,456,582,492,580,525,605,562,618,598,618,630,635,667,680,700,725,736,775,770,805,805,818,841,800,874,770,910,735,942,725,979,715,1013,730,1048,765,1085,775,1118,805,1153,822,1186,835,1222,840,1255,870]));
var ma10a = mapPts(m7, [17,260,50,278,90,295,120,310,150,335,180,380,205,435,240,480,275,510,310,545,345,590,380,625,420,680,460,712,505,742,540,752,570,760,610,770,645,775,670,795,730,818,765,835,800,870,830,900,860,945,890,1005,920,1045,955,1090,990,1115,1025,1140,1056,1160,1090,1180,1120,1183,1160,1183,1190,1165,1220,1140,1250,1128,1285,1118,1320,1112,1365,1112]);
var ma10b = [[607,643],[660,605]].concat(mapPts(m8, [245,1500,290,1460,350,1412,390,1408,415,1395,450,1395,485,1382,540,1400,580,1400,640,1380,720,1352,770,1343,810,1345,860,1358,920,1360,1000,1365,1040,1340,1070,1290,1130,1240,1195,1180,1260,1080,1320,1000,1390,915,1425,840,1480,765,1520,670])).concat(mapPts(m9, [30,300,75,283,110,288,142,275,178,295,215,350,250,415,300,460,350,520,400,565,445,583,490,595,540,607,630,607,665,625,730,685,790,718,830,742,880,745,935,760,965,765,1050,765,1085,757,1118,765,1158,767,1200,790,1250,820]));
var ma20a = mapPts(m7, [17,362,50,355,75,346,110,348,160,348,200,352,265,370,305,392,350,430,410,475,460,520,510,570,565,617,630,655,680,705,735,745,765,765,800,800,830,818,860,845,900,885,960,935,1010,960,1060,990,1120,1020,1165,1045,1220,1078,1270,1105,1320,1118,1365,1130]);
var ma20b = [[607,643],[660,625],[720,606]].concat(mapPts(m8, [470,1500,540,1465,600,1425,680,1395,780,1365,850,1375,1000,1360,1040,1340,1090,1300,1200,1270,1290,1195,1360,1150,1440,1035])).concat(mapPts(m9, [0,580,45,525,100,480,145,450,180,445,260,450,310,438,360,423,440,435,490,432,540,460,600,512,650,535,680,565,700,595,770,645,850,665,900,678,960,685,1040,715,1120,735,1200,765,1250,785]));
var ma60 = mapPts(m7, [17,553,60,545,130,530,260,522,420,522,490,526,550,532,620,538,680,545,780,565,880,600,980,630,1095,655,1180,680,1300,715,1400,745,1500,778]).concat(mapPts(m8, [0,1382,100,1410,250,1450,380,1490,430,1500])).concat(mapPts(mF, [813,590,850,592,992,592,1020,587])).concat(mapPts(m8, [1140,1500,1240,1465,1360,1410,1420,1365])).concat(mapPts(m9, [0,950,30,925,110,900,250,852,380,800,500,755,600,738,700,730,800,717,880,703,1030,685,1140,672,1250,672]));

/* upper chart */
var main = document.getElementById('mainChart');
[192, 308, 427, 544, 662].forEach(function (y) {
  el(main, 'line', 'gridline', { x1: 0, x2: 1711, y1: y, y2: y });
});
function drawCandle(m, c) {
  var top = m(c[1], c[2]), bot = m(c[1], c[3]), bt = m(c[1], c[4]), bb = m(c[1], c[5]);
  var x = Math.round(top[0]);
  var up = c[0] === 'r';
  el(main, 'line', up ? 'up-wick' : 'dn-wick', { x1: x, x2: x, y1: top[1].toFixed(1), y2: bot[1].toFixed(1) });
  el(main, 'rect', up ? 'up-body' : 'dn-body', { x: up ? x - 4.5 : x - 5, y: bt[1].toFixed(1), width: up ? 9 : 10, height: Math.max(bb[1] - bt[1], 2).toFixed(1) });
}
c7.forEach(function (c) { drawCandle(m7, c); });
el(main, 'rect', 'cover', { x: 540, y: 643, width: 66, height: 40 });
cF.forEach(function (c) { drawCandle(mF, c); });
c8.forEach(function (c) { drawCandle(m8, c); });
c9.forEach(function (c) { drawCandle(m9, c); });

[['line-ma60', ma60], ['line-ma20', ma20a], ['line-ma20', ma20b], ['line-ma10', ma10a], ['line-ma10', ma10b], ['line-ma5', ma5a], ['line-ma5', ma5b]].forEach(function (l) {
  el(main, 'polyline', l[0], { points: toStr(l[1]) });
});

el(main, 'line', 'axisline', { x1: 1711, x2: 1711, y1: 67, y2: 781 });
[[191,'20.00'],[250,'19.00'],[308,'18.00'],[368,'17.00'],[427,'16.00'],[486,'15.00'],[544,'14.00'],[605,'13.00'],[662,'12.00']].forEach(function (a) {
  el(main, 'line', 'tick', { x1: 1711, x2: 1720, y1: a[0], y2: a[0] });
  el(main, 'text', 'axislabel', { x: 1779, y: a[0] + 1 }, a[1]);
});
el(main, 'path', 'extreme-arrow', { d: 'M1165 106 V97 L1180 103 M1165 97 L1169 100 M1165 97 L1168 94' });
el(main, 'text', 'extreme', { x: 1184, y: 106 }, '21.58');
el(main, 'path', 'extreme-arrow', { d: 'M366 749 H384 M366 749 L370 746 M366 749 L370 752' });
el(main, 'text', 'extreme', { x: 386, y: 751 }, '10.51');
el(main, 'text', 'mark mark-a', { x: 1155, y: 769 }, '龙榜');
el(main, 'text', 'mark mark-b', { x: 1265, y: 769 }, '停');
el(main, 'text', 'mark mark-c', { x: 1367, y: 769 }, '财');

/* lower chart */
var sub = document.getElementById('subChart');
[815, 882, 946, 1012, 1076, 1142, 1207].forEach(function (y) {
  el(sub, 'line', 'gridline', { x1: 0, x2: 1711, y1: y, y2: y });
});
var m10 = function (x, y) { return [960 + x / 3, 780 + y / 3]; };
var green = [
  [[58,1257],[70,1272],[164,1272],[173,1265],[225,1265],[234,1272],[355,1272],[366,1263],[380,1262],[386,1257]],
  [[443,1257],[464,1272],[600,1272],[615,1257]],
  [[734,1257],[738,1272],[780,1272],[790,1257]],
  [[851,1257],[855,1262],[868,1263],[871,1257]],
  [[930,1257],[942,1272],[998,1272],[999,1257]],
  [[1265,1257],[1267,1271],[1305,1271],[1307,1257]],
  [[1427,1257],[1434,1272],[1473,1272],[1484,1257]],
  [[1545,1257],[1549,1262],[1562,1262],[1572,1272],[1590,1272],[1597,1258]]
];
green.forEach(function (p) { el(sub, 'polygon', 'green-area', { points: toStr(p) }); });
var reds = [
  [[6,1253],[52,1253],[58,1258],[6,1259]],
  [[386,1259],[404,1247],[418,1247],[432,1257],[443,1258],[443,1259]],
  [[615,1259],[621.6,1238],[637,1238],[648,1228],[661,1228],[673.6,1196],[687,1214],[701,1214],[713,1224],[727,1224],[735,1259]],
  [[790,1259],[802,1244],[843,1244],[852,1259]],
  [[870,1259],[885,1248],[922,1248],[930,1259]],
  mapPts(m10, [118,1437,130,1395,150,1320,165,1240,185,1163,205,1158,262,1155,303,982,340,1100,378,987,415,987,435,790,457,617,492,780,530,660,572,270,610,265,650,620,727,90,760,775,845,780,880,1065,900,1270,917,1437]),
  [[1307,1259],[1317,1222],[1325,1223],[1357,1223],[1368,1194],[1382,1244],[1422,1244],[1428,1259]],
  [[1483,1258],[1498,1257],[1510,1247],[1537,1247],[1546,1259]],
  [[1597,1259],[1627,1239],[1653,1239],[1665,1259]]
];
reds.forEach(function (p) { el(sub, 'polygon', 'red-area', { points: toStr(p) }); });
[[6,1253],[32,1253],[44,1253],[418,1247],[687,1214],[713,1224],[829,1244],[843,1244],[919,1248],
 [1073,1148],[1099,1109],[1124,1043],[1177,993],[1214,1038],[1228,1040],[1241,1040],[1253,1135],
 [1331,1223],[1343,1223],[1357,1223],[1382,1244],[1394,1244],[1408,1244],[1421,1244],[1523,1247],[1638,1239],[1652,1239]
].forEach(function (s) {
  el(sub, 'line', 'sig-line', { x1: s[0], x2: s[0], y1: s[1], y2: 1257 });
});
el(sub, 'line', 'base-line', { x1: 6, x2: 1663, y1: 1273, y2: 1273 });
[[1262,1203,1266,1255],[998,1259,1000,1272],[727,1224,735,1258],[1305,1259,1307,1272],[1536,1247,1546,1260],[1588,1272,1596,1258]].forEach(function (d) {
  el(sub, 'line', 'edge-dots', { x1: d[0], y1: d[1], x2: d[2], y2: d[3] });
});
[628, 691, 808, 885, 1026, 1040, 1103, 1168, 1219, 1334, 1618].forEach(function (x) {
  el(sub, 'text', 'flag', { x: x, y: 1258 }, '异动');
});
el(sub, 'line', 'axisline', { x1: 1711, x2: 1711, y1: 782, y2: 1282 });
[[816,'14000'],[882,'12000'],[947,'10000'],[1012,'8000'],[1077,'6000'],[1142,'4000'],[1207,'2000']].forEach(function (a) {
  el(sub, 'line', 'tick', { x1: 1711, x2: 1720, y1: a[0], y2: a[0] });
  el(sub, 'text', 'axislabel', { x: 1778, y: a[0] + 1 }, a[1]);
});
[849, 914, 979, 1044, 1109, 1175, 1240].forEach(function (y) {
  el(sub, 'line', 'tick', { x1: 1711, x2: 1715, y1: y, y2: y });
});
el(sub, 'rect', 'now-box', { x: 1712, y: 841, width: 73, height: 24 });
el(sub, 'text', 'now-text', { x: 1746, y: 853 }, '12485');
el(sub, 'rect', 'unit-box', { x: 1713, y: 1260, width: 44, height: 22 });
el(sub, 'text', 'unit-text', { x: 1715, y: 1271 }, 'X1万');

/* date axis */
var date = document.getElementById('dateAxis');
[160, 403, 917, 1187, 1470].forEach(function (x) {
  el(date, 'line', 'tick', { x1: x, x2: x, y1: 1283, y2: 1305 });
});
[220, 281, 342, 463, 525, 585, 763, 850, 985, 1052, 1120, 1258, 1329].forEach(function (x) {
  el(date, 'line', 'tick', { x1: x, x2: x, y1: 1283, y2: 1288 });
});
el(date, 'text', 'date-label', { x: 6, y: 1295 }, '2022年');
[[162,'4'],[405,'5'],[919,'7'],[1189,'8'],[1472,'9']].forEach(function (l) {
  el(date, 'text', 'date-label', { x: l[0], y: 1295 }, l[1]);
});
el(date, 'rect', 'date-now', { x: 645, y: 1283, width: 115, height: 22 });
el(date, 'text', 'date-now-text', { x: 646, y: 1295 }, '2022/06/01/三');
el(date, 'line', 'axisline', { x1: 1712, x2: 1712, y1: 1283, y2: 1305 });
el(date, 'text', 'date-cell', { x: 1748, y: 1295 }, '日线');
```
